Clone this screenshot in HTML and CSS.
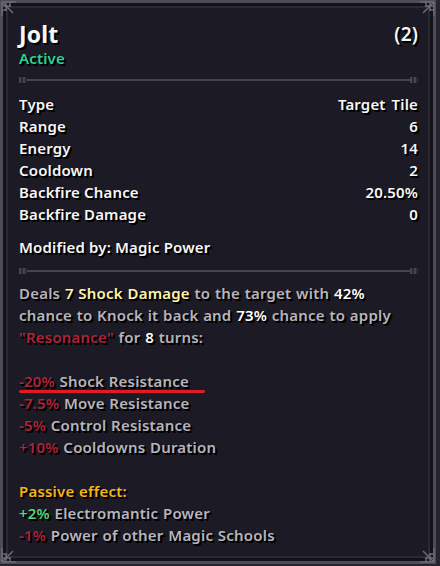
FILE: index.html
```html
<html lang="en">
  <head>
    <meta name="viewport" content="width=device-width,initial-scale=1">
    <title>Jolt</title>
    <link rel="stylesheet" href="styles.css">
  </head>
<body>
  <div class="tooltip">
    <svg class="corner tl" width="16" height="16" viewBox="0 0 16 16"><path d="M1 1H15M1 1V15M1 5H10M5 1V10M1 9H6M9 1V6M1 1L12 12" stroke="#6b6974" stroke-width="1.5" fill="none"/></svg>
    <svg class="corner tr" width="16" height="16" viewBox="0 0 16 16"><path d="M1 1H15M1 1V15M1 5H10M5 1V10M1 9H6M9 1V6M1 1L12 12" stroke="#6b6974" stroke-width="1.5" fill="none"/></svg>
    <svg class="corner bl" width="16" height="16" viewBox="0 0 16 16"><path d="M1 1H15M1 1V15M1 5H10M5 1V10M1 9H6M9 1V6M1 1L12 12" stroke="#6b6974" stroke-width="1.5" fill="none"/></svg>
    <svg class="corner br" width="16" height="16" viewBox="0 0 16 16"><path d="M1 1H15M1 1V15M1 5H10M5 1V10M1 9H6M9 1V6M1 1L12 12" stroke="#6b6974" stroke-width="1.5" fill="none"/></svg>

    <div class="inner">
      <div class="head">
        <div class="name">Jolt</div>
        <div class="charges">(2)</div>
      </div>
      <div class="state">Active</div>

      <div class="divider"></div>

      <div class="stats">
        <div class="row"><span>Type</span><span>Target Tile</span></div>
        <div class="row"><span>Range</span><span>6</span></div>
        <div class="row"><span>Energy</span><span>14</span></div>
        <div class="row"><span>Cooldown</span><span>2</span></div>
        <div class="row"><span>Backfire Chance</span><span>20.50%</span></div>
        <div class="row"><span>Backfire Damage</span><span>0</span></div>
      </div>
      <div class="modified">Modified by: Magic Power</div>

      <div class="divider second"></div>

      <div class="desc">
        <div>Deals <span class="yellow">7 Shock Damage</span> to the target with <span class="white">42%</span></div>
        <div>chance to Knock it back and <span class="white">73%</span> chance to apply</div>
        <div><span class="red">"Resonance"</span> for <span class="white">8</span> turns:</div>
        <div class="blank"></div>
        <div><span class="marked"><span class="red">-20%</span> Shock Resistance</span></div>
        <div><span class="red">-7.5%</span> Move Resistance</div>
        <div><span class="red">-5%</span> Control Resistance</div>
        <div><span class="red">+10%</span> Cooldowns Duration</div>
        <div class="blank"></div>
        <div class="orange">Passive effect:</div>
        <div><span class="green">+2%</span> Electromantic Power</div>
        <div><span class="red">-1%</span> Power of other Magic Schools</div>
      </div>
    </div>
  </div>
</body>
</html>
```

FILE: styles.css
```css
html, body {
  padding: 0;
  margin: 0;
  background: #26242c;
}
.tooltip {
  position: relative;
  width: 436px;
  height: 564px;
  box-sizing: border-box;
  background: #1c1a25;
  border: 3px solid #4d4b55;
  box-shadow: inset 0 0 0 3px #141219, inset 0 0 0 5px #2b2933;
  font-family: "Noto Sans", sans-serif;
  font-weight: 600;
  font-size: 15px;
  letter-spacing: 0.15px;
  line-height: 22px;
  color: #f6f6f6;
  text-shadow: 1px 1px 0 #000, 2px 2px 0 #000;
}
.corner {
  position: absolute;
}
.corner.tl { top: -2px; left: -2px; }
.corner.tr { top: -2px; right: -2px; transform: scaleX(-1); }
.corner.bl { bottom: -2px; left: -2px; transform: scaleY(-1); }
.corner.br { bottom: -2px; right: -2px; transform: scale(-1, -1); }
.inner {
  padding: 18px 15px 0 16px;
}
.head {
  display: flex;
  justify-content: space-between;
  align-items: center;
  height: 26px;
}
.name {
  font-size: 23px;
  font-weight: 700;
}
.charges {
  font-size: 19px;
}
.state {
  color: #2ed394;
}
.divider {
  position: relative;
  height: 2px;
  margin: 10px 0 12px 0;
  background: #46444e;
}
.divider::before,
.divider::after {
  content: "";
  position: absolute;
  top: -2px;
  width: 8px;
  height: 6px;
  background: repeating-linear-gradient(90deg, #46444e 0 2px, #2c2a33 2px 4px);
}
.divider::before { left: 0; }
.divider::after { right: 0; }
.divider.second {
  margin: 12px 0 10px 0;
}
.row {
  display: flex;
  justify-content: space-between;
}
.row span:last-child {
  word-spacing: 2px;
}
.modified {
  margin-top: 11px;
}
.desc {
  color: #b7b5bb;
  letter-spacing: 0.2px;
  word-spacing: 0.6px;
}
.blank {
  height: 22px;
}
.yellow { color: #fff3a8; }
.white { color: #ffffff; }
.red { color: #ad243b; }
.orange { color: #f7b21c; }
.green { color: #57d67e; }
.marked {
  position: relative;
}
.marked::after {
  content: "";
  position: absolute;
  left: 0;
  right: -16px;
  bottom: -2px;
  height: 3px;
  border-radius: 2px;
  background: #e01a26;
}
```
